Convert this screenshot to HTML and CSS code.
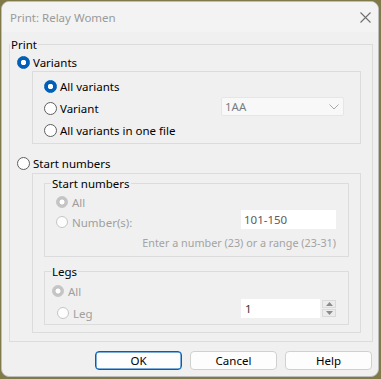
FILE: index.html
```html
<!DOCTYPE html>
<html>
<head>
<meta charset="utf-8">
<link rel="stylesheet" href="styles.css">
</head>
<body>
<div class="window">
  <div class="titlebar">
    <span class="title">Print: Relay Women</span>
    <svg class="close" width="11" height="11" viewBox="0 0 11 11"><path d="M0.5 0.5L10.5 10.5M10.5 0.5L0.5 10.5" stroke="#6f6f6f" stroke-width="1.1" fill="none"/></svg>
  </div>
  <div class="content">
    <div class="group print">
      <span class="legend">Print</span>
      <div class="print-body">
        <div class="row top-row"><span class="radio checked"></span><span>Variants</span></div>
        <div class="box variants">
          <div class="row vrow"><span class="radio checked"></span><span>All variants</span></div>
          <div class="row vrow"><span class="radio"></span><span class="grow">Variant</span>
            <div class="combo"><span>1AA</span>
              <svg width="10" height="6" viewBox="0 0 10 6"><path d="M0.5 0.5L5 5L9.5 0.5" stroke="#a8a8a8" stroke-width="1" fill="none"/></svg>
            </div>
          </div>
          <div class="row vrow"><span class="radio"></span><span>All variants in one file</span></div>
        </div>
        <div class="row start-row"><span class="radio"></span><span>Start numbers</span></div>
        <div class="box startbox">
          <div class="group sub">
            <span class="legend">Start numbers</span>
            <div class="sn-body">
              <div class="row srow disabled"><span class="radio checked dis"></span><span>All</span></div>
              <div class="row srow disabled"><span class="radio dis"></span><span class="grow">Number(s):</span>
                <div class="input num">101-150</div>
              </div>
              <div class="hint">Enter a number (23) or a range (23-31)</div>
            </div>
          </div>
          <div class="group sub legs">
            <span class="legend">Legs</span>
            <div class="legs-body">
              <div class="row srow disabled"><span class="radio checked dis"></span><span>All</span></div>
              <div class="row srow disabled leg-row"><span class="radio dis"></span><span class="grow">Leg</span>
                <div class="input spin">1</div>
                <div class="spinbtns">
                  <div class="sbtn"><svg width="7" height="4" viewBox="0 0 7 4"><path d="M0 4L3.5 0L7 4Z" fill="#8c8c8c"/></svg></div>
                  <div class="sbtn"><svg width="7" height="4" viewBox="0 0 7 4"><path d="M0 0L3.5 4L7 0Z" fill="#8c8c8c"/></svg></div>
                </div>
              </div>
            </div>
          </div>
        </div>
      </div>
    </div>
    <div class="buttons">
      <button class="btn default">OK</button>
      <button class="btn">Cancel</button>
      <button class="btn">Help</button>
    </div>
  </div>
</div>
</body>
</html>
```

FILE: styles.css
```css
html, body {
  margin: 0;
  padding: 0;
}
body {
  width: 381px;
  height: 379px;
  background: #7f7a48;
  padding: 1px 0 0 1px;
  box-sizing: border-box;
  font-family: "Noto Sans", sans-serif;
  font-size: 11.5px;
  color: #000;
}
.window {
  width: 378px;
  height: 376px;
  box-sizing: border-box;
  border: 1px solid #bdbdbd;
  border-radius: 8px;
  background: #f0f0f0;
  overflow: hidden;
  display: flex;
  flex-direction: column;
}
.titlebar {
  height: 30px;
  background: #f3f3f3;
  display: flex;
  align-items: center;
  padding: 0 7px 0 8px;
  flex: none;
}
.title {
  flex: 1;
  color: #9a9a9a;
  font-size: 11.5px;
}
.close {
  margin-top: 1px;
}
.content {
  padding: 12px 5px 0 7px;
  display: flex;
  flex-direction: column;
}
.group {
  border: 1px solid #dcdcdc;
  display: flex;
  flex-direction: column;
}
.legend {
  align-self: flex-start;
  margin: -8px 0 0 0;
  padding: 0 1px;
  height: 16px;
  line-height: 16px;
  background: #f0f0f0;
}
.print-body {
  display: flex;
  flex-direction: column;
  padding: 0 11px 8px 7px;
}
.row {
  display: flex;
  align-items: center;
}
.radio {
  width: 13px;
  height: 13px;
  box-sizing: border-box;
  border-radius: 50%;
  border: 1px solid #5f5f5f;
  background: #fff;
  flex: none;
  margin-right: 3px;
}
.radio.checked {
  border-color: #005fb8;
  background: radial-gradient(circle, #fff 0 2.4px, #005fb8 3px);
}
.radio.dis {
  width: 12px;
  height: 12px;
  border-color: #c6c6c6;
  background: #fdfdfd;
  margin-right: 4px;
}
.radio.checked.dis {
  background: radial-gradient(circle, #fff 0 2.2px, #c4c4c4 2.8px);
}
.top-row {
  height: 18px;
}
.box {
  margin-left: 15px;
  border: 1px solid #dcdcdc;
  display: flex;
  flex-direction: column;
}
.variants {
  padding: 3px 16px 2px 11px;
}
.vrow {
  height: 22px;
}
.grow {
  flex: 1;
}
.combo {
  align-self: flex-start;
  width: 123px;
  height: 19px;
  box-sizing: border-box;
  border: 1px solid #e6e6e6;
  border-radius: 2px;
  background: #f8f8f8;
  color: #7d7d7d;
  display: flex;
  align-items: center;
  justify-content: space-between;
  padding: 0 4px 0 3px;
}
.start-row {
  margin-top: 9px;
  height: 20px;
}
.startbox {
  padding: 9px 11px 7px 11px;
}
.sub .legend {
  margin-left: 6px;
}
.sn-body {
  display: flex;
  flex-direction: column;
  padding: 0 12px 3px 11px;
}
.srow {
  height: 20px;
}
.disabled {
  color: #9f9f9f;
}
.input {
  align-self: flex-start;
  height: 19px;
  box-sizing: border-box;
  background: #fff;
  display: flex;
  align-items: center;
  padding-left: 3px;
}
.num {
  width: 95px;
  margin-top: -2px;
  color: #5c5c5c;
}
.hint {
  margin-top: 1px;
  height: 20px;
  line-height: 20px;
  text-align: right;
  color: #a3a3a3;
  font-size: 10.8px;
}
.legs {
  margin-top: 14px;
}
.legs-body {
  display: flex;
  flex-direction: column;
  padding: 1px 12px 1px 7px;
}
.leg-row {
  margin-top: 2px;
}
.leg-row .radio {
  margin-left: 5px;
}
.spin {
  width: 79px;
  margin-top: -4px;
  color: #333;
  padding-left: 4px;
}
.spinbtns {
  align-self: flex-start;
  margin-top: -3px;
  margin-left: 2px;
  display: flex;
  flex-direction: column;
  gap: 1px;
}
.sbtn {
  width: 14px;
  height: 8px;
  box-sizing: border-box;
  border: 1px solid #dadada;
  background: #ececec;
  display: flex;
  align-items: center;
  justify-content: center;
}
.buttons {
  margin-top: 9px;
  margin-right: 1px;
  display: flex;
  justify-content: flex-end;
  gap: 8px;
}
.btn {
  width: 87px;
  height: 19px;
  box-sizing: border-box;
  border: 1px solid #d0d0d0;
  border-radius: 4px;
  background: #fdfdfd;
  font-family: "Noto Sans", sans-serif;
  font-size: 11.5px;
  color: #000;
  padding: 0;
  line-height: 16px;
}
.btn.default {
  border-color: #005fb8;
  box-shadow: inset 0 0 0 0.5px #005fb8;
}
```
